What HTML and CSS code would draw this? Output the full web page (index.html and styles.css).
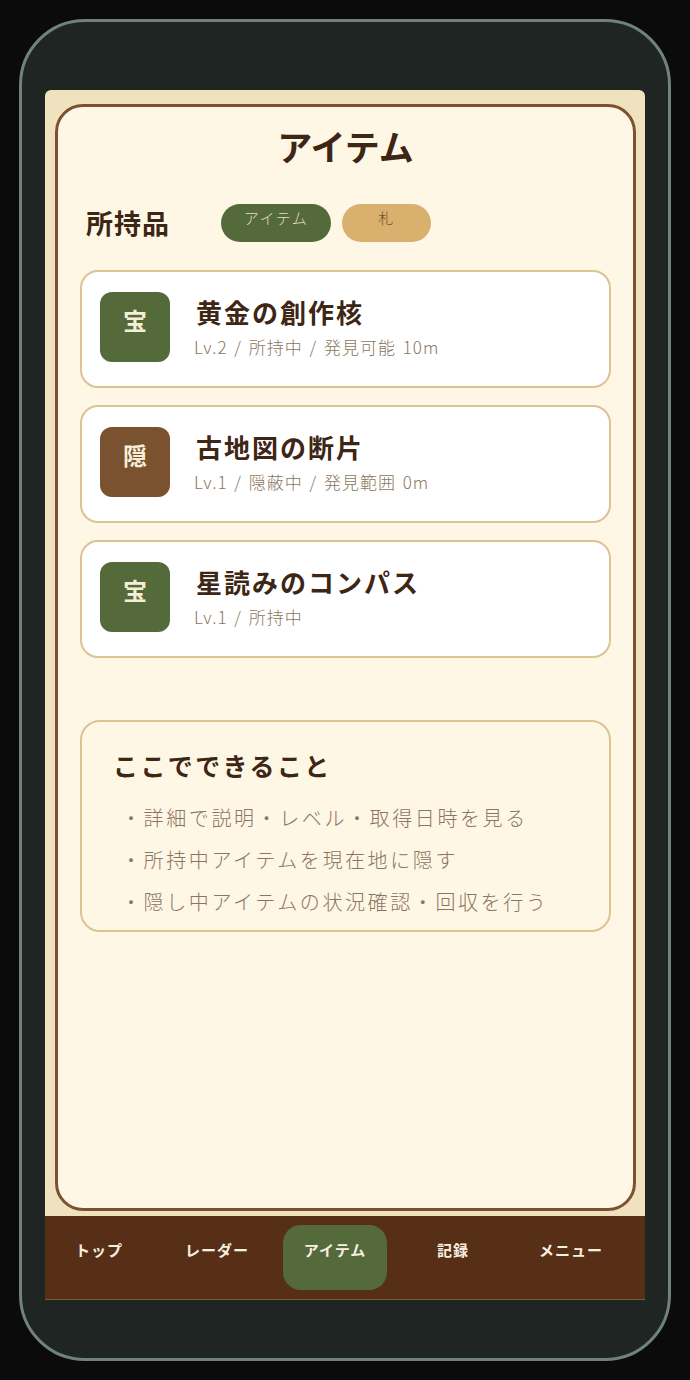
FILE: index.html
```html
<!DOCTYPE html>
<html lang="ja">
<head>
  <meta charset="UTF-8">
  <title>アイテム</title>
  <link rel="stylesheet" href="styles.css">
</head>
<body>

  <div class="phone">
    <div class="screen">
      <main class="frame">
        <h1 class="page-title">アイテム</h1>

        <div class="tabs-row">
          <h2 class="section-label">所持品</h2>
          <div class="tabs">
            <button type="button" class="tab active">アイテム</button>
            <button type="button" class="tab">札</button>
          </div>
        </div>

        <ul class="item-list">
          <li class="item-card">
            <div class="item-icon treasure">宝</div>
            <div class="item-text">
              <div class="item-name">黄金の創作核</div>
              <div class="item-meta">Lv.2 / 所持中 / 発見可能 10m</div>
            </div>
          </li>
          <li class="item-card">
            <div class="item-icon hidden">隠</div>
            <div class="item-text">
              <div class="item-name">古地図の断片</div>
              <div class="item-meta">Lv.1 / 隠蔽中 / 発見範囲 0m</div>
            </div>
          </li>
          <li class="item-card">
            <div class="item-icon treasure">宝</div>
            <div class="item-text">
              <div class="item-name">星読みのコンパス</div>
              <div class="item-meta">Lv.1 / 所持中</div>
            </div>
          </li>
        </ul>

        <section class="help-box">
          <h3 class="help-title">ここでできること</h3>
          <ul class="help-list">
            <li>・詳細で説明・レベル・取得日時を見る</li>
            <li>・所持中アイテムを現在地に隠す</li>
            <li>・隠し中アイテムの状況確認・回収を行う</li>
          </ul>
        </section>
      </main>

      <nav class="bottom-nav">
        <a class="nav-item">トップ</a>
        <a class="nav-item">レーダー</a>
        <a class="nav-item active">アイテム</a>
        <a class="nav-item">記録</a>
        <a class="nav-item">メニュー</a>
      </nav>
    </div>
  </div>

</body>
</html>
```

FILE: styles.css
```css
* {
  box-sizing: border-box;
}
body {
  margin: 0;
  background: #0b0b0b;
  font-family: "Noto Sans CJK JP", "Noto Sans", sans-serif;
  color: #3d2614;
}
.phone {
  margin: 19px;
  width: 652px;
  height: 1342px;
  border: 3px solid #6f8377;
  border-radius: 66px;
  background: #1f2523;
  padding: 68px 23px 58px 23px;
}
.screen {
  width: 600px;
  height: 1210px;
  background: #f0e1bf;
  border-radius: 6px 6px 0 0;
  display: flex;
  flex-direction: column;
  overflow: hidden;
}
.frame {
  flex: 1;
  margin: 14px 9px 5px 10px;
  border: 3px solid #7b5231;
  border-radius: 28px;
  background: #fff7e6;
  padding-top: 19px;
}
.page-title {
  margin: 0;
  text-align: center;
  font-size: 35px;
  line-height: 40px;
  font-weight: 700;
}
.tabs-row {
  display: flex;
  align-items: center;
  margin-top: 38px;
  padding-left: 28px;
}
.section-label {
  margin: 0;
  width: 135px;
  font-size: 27px;
  line-height: 38px;
  font-weight: 700;
  letter-spacing: 1px;
}
.tabs {
  display: flex;
  gap: 11px;
}
.tab {
  height: 38px;
  border: none;
  border-radius: 19px;
  padding: 4px 0 0 0;
  font-family: inherit;
  font-size: 15px;
  line-height: 20px;
  font-weight: 300;
  letter-spacing: 1.5px;
  display: flex;
  justify-content: center;
  align-items: flex-start;
  width: 89px;
  background: #d9b06e;
  color: #6e5030;
}
.tab.active {
  width: 110px;
  background: #546a3b;
  color: #e6dcc6;
}
.item-list {
  list-style: none;
  margin: 28px 22px 0 22px;
  padding: 0;
  display: flex;
  flex-direction: column;
  gap: 17px;
}
.item-card {
  height: 118px;
  background: #fff;
  border: 2px solid #dcc394;
  border-radius: 18px;
  padding: 20px 18px;
  display: flex;
  align-items: flex-start;
  gap: 26px;
}
.item-icon {
  width: 70px;
  height: 70px;
  border-radius: 12px;
  padding-top: 14px;
  text-align: center;
  font-size: 24px;
  line-height: 28px;
  font-weight: 700;
  color: #f7eed6;
  flex-shrink: 0;
}
.treasure {
  background: #546a3b;
}
.hidden {
  background: #7a5230;
}
.item-text {
  padding-top: 3px;
}
.item-name {
  font-size: 26px;
  line-height: 34px;
  font-weight: 700;
  letter-spacing: 2px;
}
.item-meta {
  margin-top: 7px;
  margin-left: -2px;
  font-size: 17px;
  line-height: 22px;
  font-weight: 300;
  letter-spacing: 1px;
  word-spacing: 2px;
  color: #8a7660;
}
.help-box {
  margin: 62px 22px 0 22px;
  border: 2px solid #dcc394;
  border-radius: 20px;
  padding: 25px 20px 7px 31px;
}
.help-title {
  margin: 0;
  font-size: 25px;
  line-height: 36px;
  font-weight: 700;
  letter-spacing: 2.4px;
}
.help-list {
  list-style: none;
  margin: 14px 0 0 0;
  padding: 0 0 0 8px;
  font-size: 20px;
  line-height: 42px;
  font-weight: 300;
  letter-spacing: 2.6px;
  color: #8a7660;
}
.bottom-nav {
  height: 84px;
  background: #572f17;
  border-bottom: 1px solid #7a5a3a;
  display: grid;
  grid-template-columns: repeat(5, 104px);
  gap: 14px;
  padding: 9px 0 0 2px;
}
.nav-item {
  height: 65px;
  border-radius: 18px;
  padding-top: 15px;
  text-align: center;
  font-size: 15px;
  line-height: 20px;
  font-weight: 700;
  letter-spacing: 1px;
  color: #f7efe0;
  cursor: pointer;
}
.nav-item.active {
  background: #546a3b;
}
```
